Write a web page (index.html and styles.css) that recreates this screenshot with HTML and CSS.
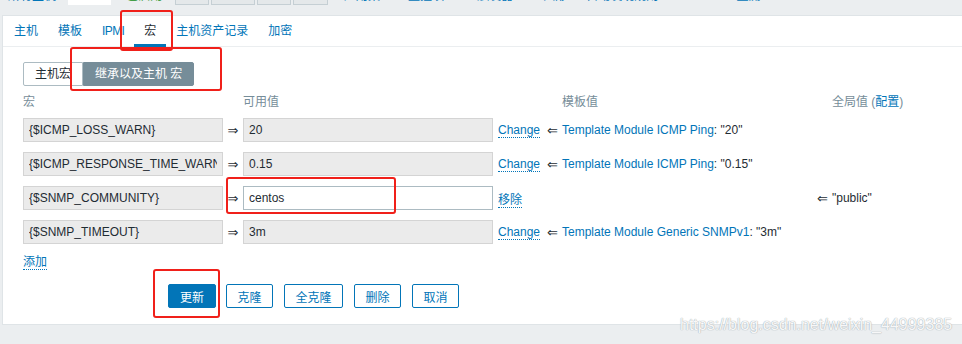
FILE: index.html
```html
<!DOCTYPE html>
<html lang="zh-CN">
<head>
  <meta charset="UTF-8" />
  <title>主机 - 宏</title>
  <link rel="stylesheet" href="styles.css">
</head>
<body>
  <div class="host-nav">
    <span class="crumb">所有主机</span>
    <span class="crumb current">centos</span>
    <span class="status">已启用</span>
    <span class="proto first">ZBX</span>
    <span class="proto">SNMP</span>
    <span class="proto">JMX</span>
    <span class="proto">IPMI</span>
    <a class="nav-link l1">应用集</a>
    <a class="nav-link l2">监控项</a>
    <a class="nav-link l3">触发器</a>
    <a class="nav-link l4">图形</a>
    <a class="nav-link l5">自动发现规则</a>
    <a class="nav-link l6">Web监测</a>
  </div>

  <div class="panel">
    <ul class="tabs">
      <li><a>主机</a></li>
      <li><a>模板</a></li>
      <li><a class="latin">IPMI</a></li>
      <li class="active"><a>宏</a></li>
      <li><a>主机资产记录</a></li>
      <li><a>加密</a></li>
    </ul>

    <div class="tab-body">
      <div class="radio-group">
        <label>主机宏</label>
        <label class="checked">继承以及主机 宏</label>
      </div>

      <div class="macros">
        <div class="th">宏</div><div></div><div class="th">可用值</div><div></div><div></div><div class="th">模板值</div><div></div><div class="th">全局值 (<a class="plain">配置</a>)</div>

        <input class="field" readonly value="{$ICMP_LOSS_WARN}"><span class="arrow">⇒</span><input class="field" readonly value="20">
        <span class="cell-link"><a class="link">Change</a></span><span class="arrow back">⇐</span><span><a class="plain">Template Module ICMP Ping</a>: "20"</span><span></span><span></span>

        <input class="field" readonly value="{$ICMP_RESPONSE_TIME_WARN}"><span class="arrow">⇒</span><input class="field" readonly value="0.15">
        <span class="cell-link"><a class="link">Change</a></span><span class="arrow back">⇐</span><span><a class="plain">Template Module ICMP Ping</a>: "0.15"</span><span></span><span></span>

        <input class="field" readonly value="{$SNMP_COMMUNITY}"><span class="arrow">⇒</span><input class="field editable" value="centos">
        <span class="cell-link"><a class="link">移除</a></span><span></span><span></span><span class="arrow back">⇐</span><span>"public"</span>

        <input class="field" readonly value="{$SNMP_TIMEOUT}"><span class="arrow">⇒</span><input class="field" readonly value="3m">
        <span class="cell-link"><a class="link">Change</a></span><span class="arrow back">⇐</span><span><a class="plain">Template Module Generic SNMPv1</a>: "3m"</span><span></span><span></span>
      </div>

      <div class="add-row"><a class="link">添加</a></div>

      <div class="actions">
        <button class="btn primary">更新</button>
        <button class="btn">克隆</button>
        <button class="btn">全克隆</button>
        <button class="btn">删除</button>
        <button class="btn">取消</button>
      </div>
    </div>
  </div>

  <div class="mark mark-tab"></div>
  <div class="mark mark-radio"></div>
  <div class="mark mark-value"></div>
  <div class="mark mark-save"></div>

  <div class="watermark">https://blog.csdn.net/weixin_44999385</div>
</body>
</html>
```

FILE: styles.css
```css
body {
  margin: 0;
  width: 962px;
  height: 344px;
  overflow: hidden;
  position: relative;
  background-color: #ebeef0;
  font-family: "Liberation Sans", "Noto Sans CJK SC", Arial, sans-serif;
  font-size: 12px;
  color: #1f2c33;
}
a {
  color: #0275b8;
  text-decoration: none;
}

/* host header, mostly scrolled out of view */
.host-nav {
  height: 5px;
  overflow: hidden;
  display: flex;
  align-items: flex-end;
  padding-left: 8px;
  margin-bottom: 10px;
  white-space: nowrap;
}
.host-nav span, .host-nav a {
  line-height: 14px;
  padding-bottom: 2px;
}
.crumb {
  color: #0275b8;
}
.crumb.current {
  color: #1f2c33;
  background-color: #fff;
  margin-left: 12px;
  padding: 0 4px 8px;
}
.status {
  color: #429e47;
  margin-left: 15px;
}
.proto {
  color: #768d99;
  border: 1px solid #c5cfd4;
  background-color: #e4e8ea;
  padding: 0 4px 4px !important;
  margin-left: 2px;
}
.proto.first {
  margin-left: 13px;
}
.nav-link.l1 { margin-left: 16px; }
.nav-link.l2 { margin-left: 28px; }
.nav-link.l3 { margin-left: 33px; }
.nav-link.l4 { margin-left: 30px; }
.nav-link.l5 { margin-left: 19px; }
.nav-link.l6 { margin-left: 54px; }

.panel {
  margin-left: 2px;
  height: 310px;
  background-color: #fff;
  border: 1px solid #dfe4e7;
  border-right: none;
  box-sizing: border-box;
}

.tabs {
  list-style: none;
  margin: 0;
  padding: 0 0 0 1px;
  display: flex;
  height: 30px;
  border-bottom: 1px solid #ebeef0;
}
.tabs li {
  padding: 0 10px;
  line-height: 30px;
  position: relative;
}
.tabs .latin {
  letter-spacing: -0.6px;
}
.tabs li.active a {
  color: #1f2c33;
}
.tabs li.active::after {
  content: "";
  position: absolute;
  left: 0;
  right: 0;
  bottom: -1px;
  height: 3px;
  background-color: #0275b8;
}

.tab-body {
  padding: 15px 0 0 20px;
}

.radio-group {
  display: flex;
  height: 24px;
}
.radio-group label {
  line-height: 22px;
  padding: 0 11px;
  border: 1px solid #acbbc2;
  background-color: #fff;
}
.radio-group label:first-child {
  border-radius: 2px 0 0 2px;
}
.radio-group label.checked {
  background-color: #768d99;
  border-color: #768d99;
  color: #fff;
  padding: 0 11px;
  border-radius: 0 2px 2px 0;
}

.macros {
  margin-top: 10px;
  display: grid;
  grid-template-columns: 200px 20px 250px 54px 15px 255px 15px 1fr;
  row-gap: 10px;
  align-items: center;
}
.th {
  color: #768d99;
  line-height: 12px;
}
.field {
  height: 24px;
  box-sizing: border-box;
  padding: 0 5px;
  border: 1px solid #d4d4d4;
  background-color: #ebebeb;
  font-family: "Liberation Sans", "Noto Sans CJK SC", Arial, sans-serif;
  font-size: 12px;
  color: #1f2c33;
  outline: none;
  width: 100%;
}
.field.editable {
  background-color: #fff;
  border-color: #acbbc2;
}
.arrow {
  font-family: "DejaVu Sans", sans-serif;
  font-size: 13px;
  text-align: center;
  color: #1f2c33;
}
.arrow.back {
  text-align: left;
}
.cell-link {
  padding-left: 5px;
}
.link {
  border-bottom: 1px dotted #0275b8;
}

.add-row {
  margin-top: 11px;
  line-height: 14px;
}

.actions {
  display: flex;
  gap: 11px;
  margin-top: 15px;
  padding-left: 145px;
}
.btn {
  height: 24px;
  padding: 0 10.5px;
  font-family: "Liberation Sans", "Noto Sans CJK SC", Arial, sans-serif;
  font-size: 12px;
  color: #0275b8;
  background-color: #fff;
  border: 1px solid #0275b8;
  border-radius: 2px;
}
.btn.primary {
  color: #fff;
  background-color: #0275b8;
  padding: 0 11px;
  margin-right: -1px;
}

/* red annotation boxes drawn over the screenshot */
.mark {
  position: absolute;
  border: 2px solid #f0201a;
  border-radius: 3px;
  box-sizing: border-box;
}
.mark-tab { left: 120px; top: 10px; width: 53px; height: 41px; }
.mark-radio { left: 70px; top: 47px; width: 152px; height: 44px; }
.mark-value { left: 226px; top: 177px; width: 170px; height: 37px; }
.mark-save { left: 153px; top: 269px; width: 67px; height: 49px; }

.watermark {
  position: absolute;
  left: 680px;
  top: 316px;
  font-size: 16px;
  color: rgba(255, 255, 255, 0.92);
  text-shadow: 0 0 1px #a9b2b8, 0 0 1px #a9b2b8;
  white-space: nowrap;
}
```
